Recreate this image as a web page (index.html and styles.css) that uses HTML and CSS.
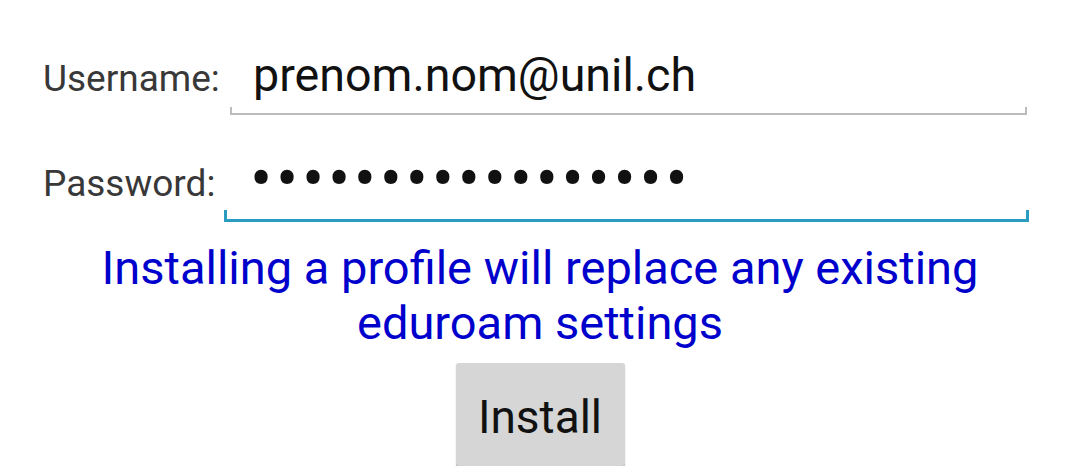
FILE: index.html
```html
<!DOCTYPE html>
<html lang="en">
<head>
    <meta charset="UTF-8">
    <meta name="viewport" content="width=device-width, initial-scale=1.0">
    <title>eduroam</title>
    <link rel="stylesheet" href="styles.css">
</head>
<body>
    <main>
        <div class="form">
            <div class="field">
                <label class="field-label" for="username">Username:</label>
                <div class="input input-user" id="username">
                    <div class="input-text">prenom.nom@unil.ch</div>
                    <div class="underline"></div>
                </div>
            </div>
            <div class="field field-focused">
                <label class="field-label" for="password">Password:</label>
                <div class="input input-pass" id="password">
                    <div class="input-text"><span class="dots">&bull;&bull;&bull;&bull;&bull;&bull;&bull;&bull;&bull;&bull;&bull;&bull;&bull;&bull;&bull;&bull;&bull;</span></div>
                    <div class="underline"></div>
                </div>
            </div>
        </div>
        <p class="notice">Installing a profile will replace any existing eduroam settings</p>
        <div class="actions">
            <button class="install">Install</button>
        </div>
    </main>
</body>
</html>
```

FILE: styles.css
```css
body {
    margin: 0;
    padding: 0;
    background: #fff;
    font-family: Roboto, "Noto Sans", sans-serif;
    overflow: hidden;
}

.form {
    padding: 47px 51px 0 43px;
}

.field {
    display: flex;
    align-items: baseline;
}

.field + .field {
    margin-top: 37px;
}

.field-label {
    width: 181px;
    flex: none;
    font-size: 37px;
    color: #383838;
}

.input {
    flex: 1;
}

.input-user {
    margin: 0 2px 0 6px;
}

.input-text {
    font-size: 46.6px;
    line-height: 56px;
    color: #111;
    padding-left: 23px;
    white-space: nowrap;
}

.input-pass .input-text {
    padding-left: 26px;
}

.dots {
    font-size: 66px;
    line-height: 0;
    letter-spacing: 3.7px;
    vertical-align: -6px;
}

.underline {
    margin-top: 4px;
    height: 6px;
    border: 2px solid #bcbcbc;
    border-top: none;
}

.input-pass .underline {
    margin-top: 2px;
    height: 9px;
    border: 3px solid #2a9cc0;
    border-top: none;
}

.notice {
    margin: 18px 0 0 0;
    padding: 0 60px;
    text-align: center;
    font-size: 47px;
    line-height: 55px;
    color: #0000cc;
}

.actions {
    margin-top: 13px;
    text-align: center;
}

.install {
    width: 169px;
    height: 103px;
    padding: 5px 0 0 0;
    font-family: Roboto, "Noto Sans", sans-serif;
    font-size: 46px;
    color: #111;
    background: #d6d6d6;
    border: none;
    border-radius: 3px;
    box-shadow: 0 1px 1px #9a9a9a;
}
```
